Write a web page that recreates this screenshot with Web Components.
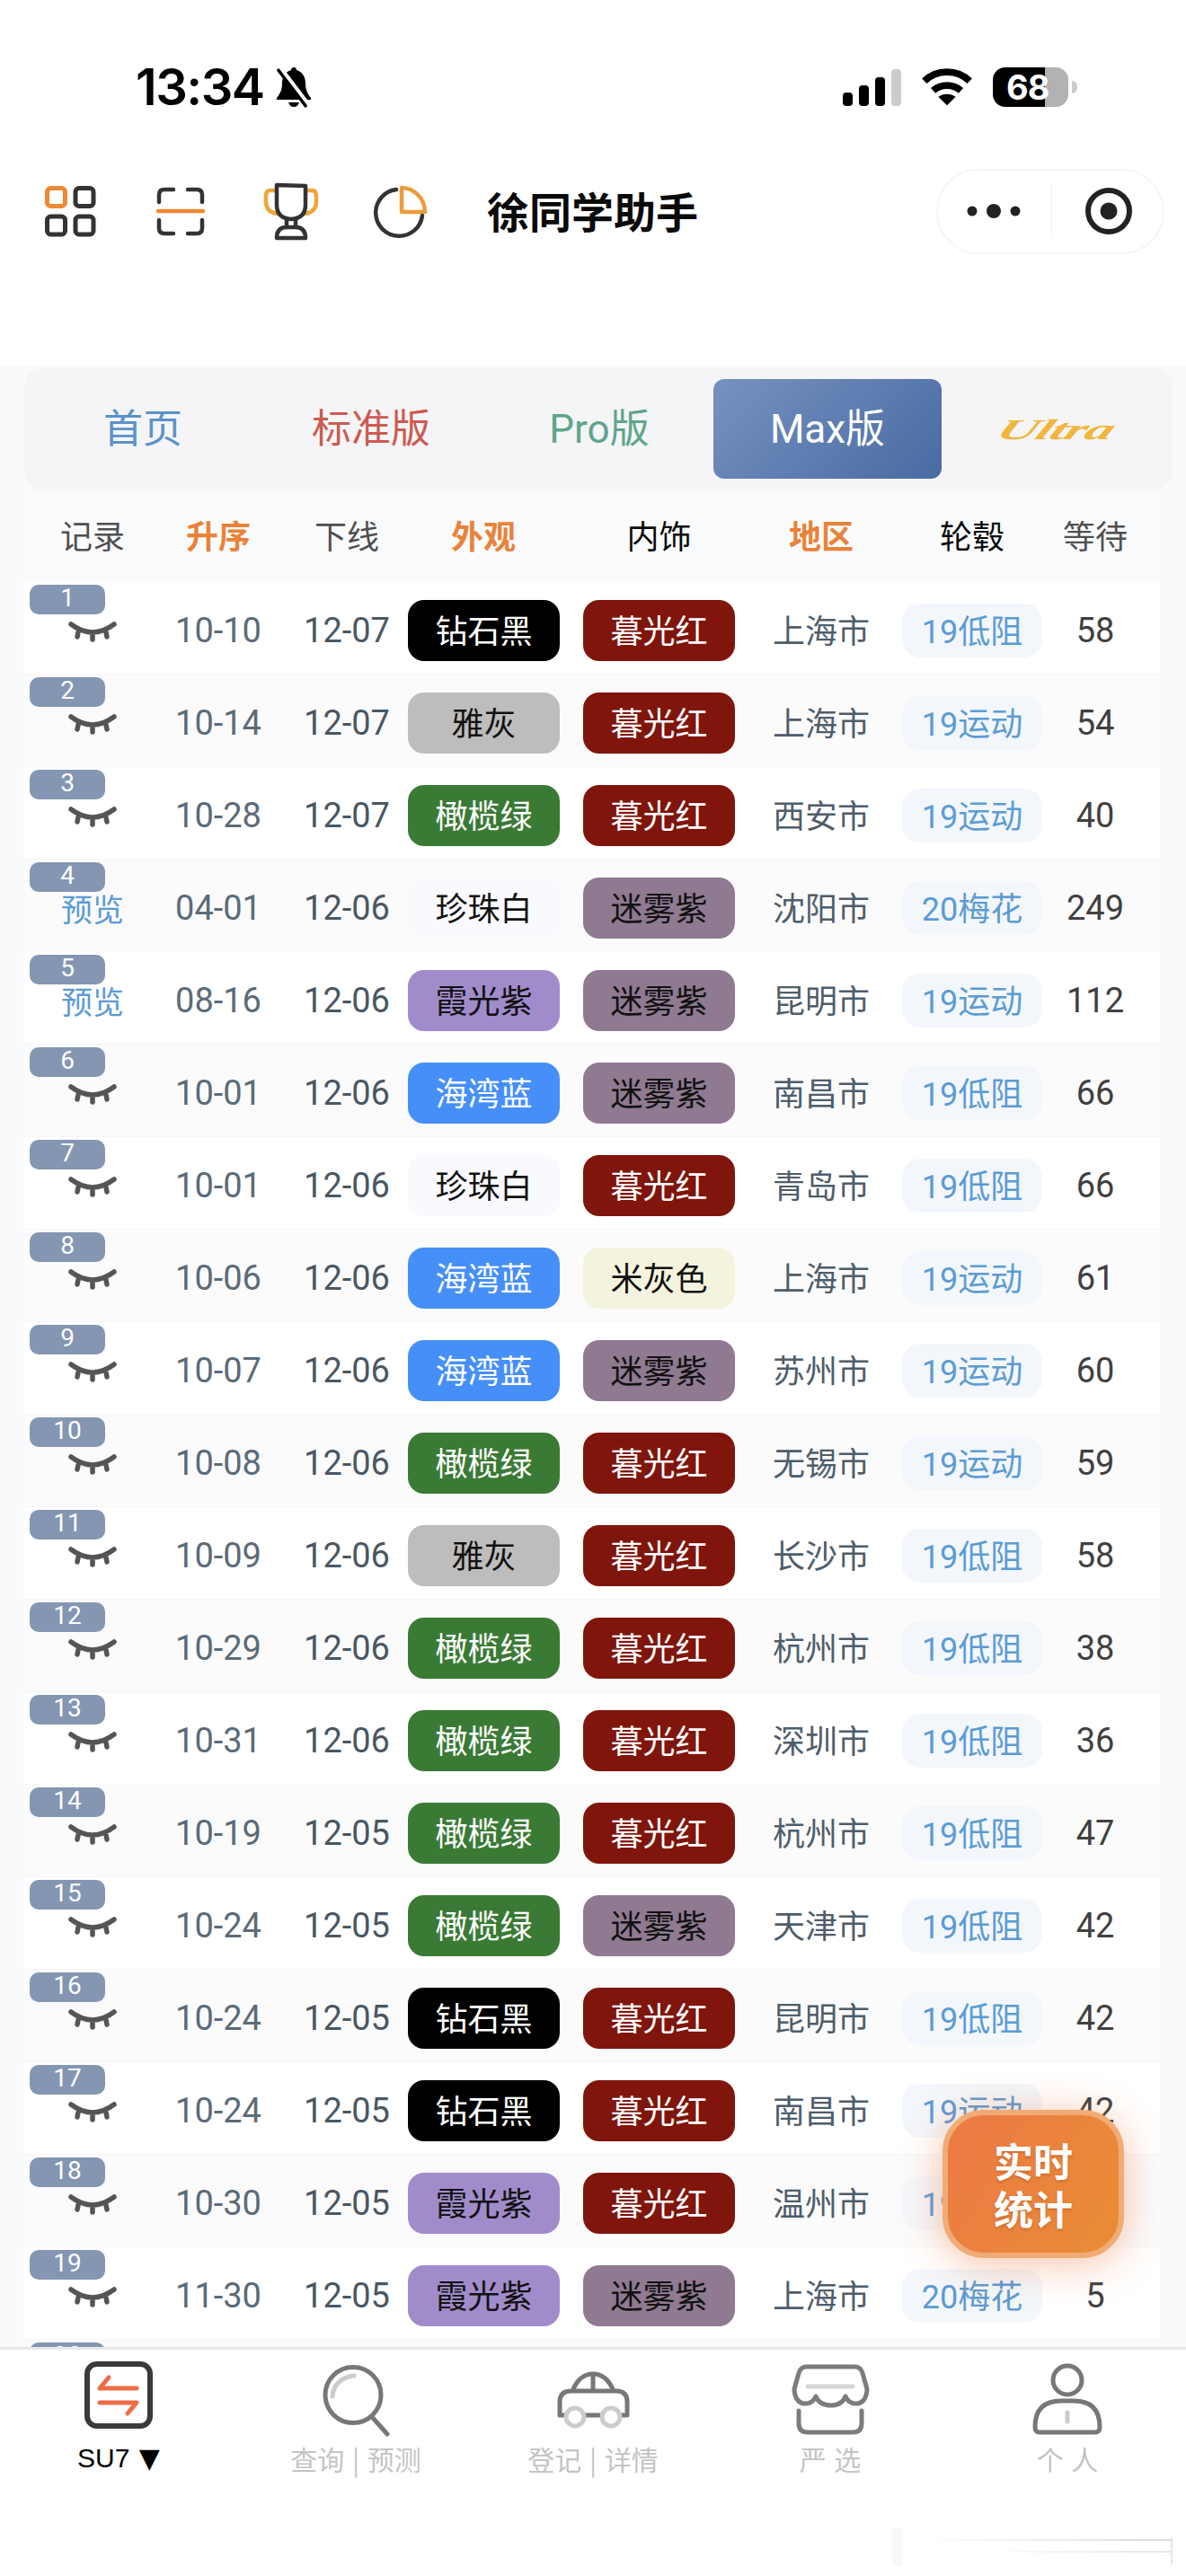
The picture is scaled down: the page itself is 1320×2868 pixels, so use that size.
<!DOCTYPE html>
<html lang="zh">
<head>
<meta charset="utf-8">
<title>徐同学助手</title>
<style>
    html, body {
        margin: 0;
        background: #fff;
    }

    body {
        height: 2868px;
        overflow: hidden;
        position: relative;
        display: flex;
        flex-direction: column;
        font-family: Roboto, "Noto Sans CJK SC", sans-serif;
        --cols: 154px 126px 148px 182px 195px 166px 170px 104px;
        --cjk: "Noto Sans CJK SC", sans-serif;
    }
</style>
</head>
<body>
<status-bar></status-bar>
<app-header></app-header>
<delivery-board>
    <version-tabs></version-tabs>
    <table-head></table-head>
</delivery-board>
<bottom-nav>
    <nav-item label="SU7" kind="su7" active></nav-item>
    <nav-item label="查询 | 预测" kind="search"></nav-item>
    <nav-item label="登记 | 详情" kind="car"></nav-item>
    <nav-item label="严 选" kind="store"></nav-item>
    <nav-item label="个 人" kind="person"></nav-item>
</bottom-nav>
<stat-fab></stat-fab>

<script>
class StatusBar extends HTMLElement {
    constructor() {
        super();
        this.attachShadow({ mode: 'open' }).innerHTML = `
<style>
    :host { display: flex; align-items: center; height: 150px; padding: 44px 0 0 151px; box-sizing: border-box; flex: none; color: #000; }
    .time { font: 600 56px/1 Inter, "Liberation Sans", sans-serif; letter-spacing: -1.5px; width: 154px; }
    .bell { width: 44px; height: 46px; display: block; }
    .right { margin-left: auto; margin-right: 121px; display: flex; align-items: center; }
    .signal { display: flex; align-items: flex-end; gap: 7px; height: 41px; }
    .signal i { width: 11px; background: #000; border-radius: 4px; display: block; }
    .signal i:last-child { background: #ccc; }
    .wifi { width: 58px; height: 44px; margin-left: 22px; display: block; }
    .battery { margin-left: 22px; width: 84px; height: 44px; border-radius: 14px; background: linear-gradient(90deg, #000 0 58px, #b2b2b2 58px); color: #fff; font: 700 38px/44px Inter, sans-serif; text-indent: 15px; letter-spacing: -1px; }
    .nub { width: 6px; height: 14px; background: #ccc; border-radius: 0 6px 6px 0; margin-left: 4px; }
</style>
<span class="time">13:34</span>
<svg class="bell" viewBox="0 0 44 46" fill="#000">
    <path d="M22 1c-2 0-3 1-3 3-7 2-10 8-10 15 0 8-3 12-6 16v2h38v-2c-3-4-6-8-6-16 0-7-3-13-10-15 0-2-1-3-3-3z"/>
    <path d="M16 40c1 3 3 5 6 5s5-2 6-5z"/>
    <path d="M6 2l32 42" stroke="#fff" stroke-width="7"/>
    <path d="M4 3l32 42" stroke="#000" stroke-width="3.5"/>
</svg>
<div class="right">
    <div class="signal"><i style="height:15px"></i><i style="height:23px"></i><i style="height:32px"></i><i style="height:41px"></i></div>
    <svg class="wifi" viewBox="0 0 60 44" fill="none" stroke="#000">
        <path d="M4 15C18 1 42 1 56 15" stroke-width="8"/>
        <path d="M14 26c9-8 23-8 32 0" stroke-width="8"/>
        <path d="M30 43L20 33c6-4 14-4 20 0z" fill="#000" stroke="none"/>
    </svg>
    <div class="battery">68</div>
    <div class="nub"></div>
</div>
`;
    }
}

class AppHeader extends HTMLElement {
    constructor() {
        super();
        this.attachShadow({ mode: 'open' }).innerHTML = `
<style>
    :host { display: flex; align-items: center; flex: none; height: 170px; margin-bottom: 88px; padding: 0 24px 0 16px; box-sizing: border-box; }
    .ico { width: 123px; height: 70px; display: flex; align-items: center; justify-content: center; flex: none; }
    svg { display: block; fill: none; stroke-linecap: round; stroke-linejoin: round; }
    h1 { margin: -4px 0 0 34px; font: 700 47px/1 var(--cjk); color: #0a0a0a; }
    .capsule { margin-left: auto; width: 254px; height: 95px; box-sizing: border-box; border: 2px solid #f5f5f5; border-radius: 48px; display: flex; align-items: center; background: #fff; }
    .capsule svg { flex: none; }
    .capsule .sep { width: 1px; height: 60px; background: #f0f0f0; flex: none; }
</style>
<div class="ico"><svg width="60" height="60" viewBox="0 0 60 60" stroke="#333" stroke-width="5">
    <rect x="4.5" y="4.5" width="20" height="20" rx="4" stroke="#ec8a35"/>
    <rect x="36" y="4.5" width="20" height="20" rx="4"/>
    <rect x="4.5" y="36" width="20" height="20" rx="4"/>
    <rect x="36" y="36" width="20" height="20" rx="4"/>
</svg></div>
<div class="ico"><svg width="60" height="60" viewBox="0 0 60 60" stroke="#333" stroke-width="4.5">
    <path d="M22 6H12Q6 6 6 12V20M38 6H48Q54 6 54 12V20M22 55H12Q6 55 6 49V40M38 55H48Q54 55 54 49V40"/>
    <path d="M5 30H55" stroke="#ec8a35"/>
</svg></div>
<div class="ico"><svg width="64" height="66" viewBox="293 202 64 66" stroke-width="4.5">
    <path d="M308 212H302Q297 212 297 218V224Q297 236 309 238M342 212H348Q353 212 353 218V224Q353 236 341 238" stroke="#eea53a"/>
    <path d="M309 206L341 207V228Q341 243 325 244Q309 243 309 228ZM320 244V253M330 244V253M309 265Q309 253 320 253H330Q341 253 341 265Z" stroke="#333"/>
</svg></div>
<div class="ico"><svg width="62" height="62" viewBox="416 204 62 62" stroke-width="4.5">
    <path d="M447 209A27 27 0 0 1 473 236H447Z" stroke="#eb9c3a"/>
    <path d="M441 211A26 26 0 1 0 470 240" stroke="#333"/>
</svg></div>
<h1>徐同学助手</h1>
<div class="capsule">
    <svg width="126" height="40" viewBox="0 0 126 40" style="fill:#222"><circle cx="38" cy="20" r="5.5"/><circle cx="62" cy="20" r="8"/><circle cx="86" cy="20" r="5.5"/></svg>
    <div class="sep"></div>
    <svg width="126" height="64" viewBox="0 0 126 64"><circle cx="63" cy="32" r="23" stroke="#222" stroke-width="6"/><circle cx="63" cy="32" r="9.5" style="fill:#222"/></svg>
</div>
`;
    }
}

class DeliveryBoard extends HTMLElement {
    constructor() {
        super();
        this.attachShadow({ mode: 'open' }).innerHTML = `
<style>
    :host { display: block; flex: none; height: 2205px; padding-top: 2px; box-sizing: border-box; overflow: hidden; background: #f9fafc; }
</style>
<slot></slot>
`;
    }
}

class VersionTabs extends HTMLElement {
    constructor() {
        super();
        this.attachShadow({ mode: 'open' }).innerHTML = `
<style>
    :host { display: flex; height: 135px; margin: 0 15px 0 27px; padding: 12px 0 12px 5px; box-sizing: border-box; background: #f5f5f8; border-radius: 20px; }
    .tab { width: 254px; flex: none; display: flex; align-items: center; justify-content: center; font-size: 44px; border-radius: 12px; }
    .tab span { margin-top: -8px; }
    .max { color: #fff; background: linear-gradient(135deg, #7592c0, #4a6aa2); }
    .tab .ultra { margin-top: 0; font: italic 700 46px/1 "Liberation Serif", serif; color: #f1b63c; letter-spacing: -1px; transform: scale(1.35, .7) skewX(-14deg); }
</style>
<div class="tab" style="color:#5a92c8"><span>首页</span></div>
<div class="tab" style="color:#cc5a50"><span>标准版</span></div>
<div class="tab" style="color:#5fa58a"><span>Pro版</span></div>
<div class="tab max"><span>Max版</span></div>
<div class="tab"><span class="ultra">Ultra</span></div>
`;
    }
}

class TableHead extends HTMLElement {
    constructor() {
        super();
        this.attachShadow({ mode: 'open' }).innerHTML = `
<style>
    :host { display: grid; grid-template-columns: var(--cols); align-items: center; justify-items: center; height: 98px; padding-bottom: 9px; box-sizing: border-box; margin: 5px 29px 0 26px; background: #fafbfd; font: 36px/1 var(--cjk); color: #4f4f4f; }
    .hot { color: #e8833a; font-weight: 700; }
    .dark { color: #0a0a0a; }
</style>
<span>记录</span>
<span class="hot">升序</span>
<span style="padding-left:12px">下线</span>
<span class="hot" style="padding-right:14px">外观</span>
<span class="dark">内饰</span>
<span class="hot">地区</span>
<span class="dark">轮毂</span>
<span>等待</span>
`;
    }
}

const pillColours = {
    '钻石黑': ['#000', '#fff'],
    '雅灰': ['#bdbdbd', '#111'],
    '橄榄绿': ['#3a7a35', '#fff'],
    '珍珠白': ['#f9f9fe', '#111'],
    '霞光紫': ['#a18ccb', '#111'],
    '海湾蓝': ['#468ff9', '#fff'],
    '暮光红': ['#80150c', '#fff'],
    '迷雾紫': ['#8f7a92', '#111'],
    '米灰色': ['#f4f4de', '#111']
};

const rowTemplate = document.createElement('template');
rowTemplate.innerHTML = `
<style>
    :host { display: grid; grid-template-columns: var(--cols); align-items: center; justify-items: center; height: 103px; width: 1265px; margin-left: 26px; padding-top: 5px; box-sizing: border-box; border-bottom: 1px solid #f6f6f7; background: #fff; font-size: 38px; }
    :host([even]) { background: #fbfbfc; }
    .rec { align-self: start; justify-self: stretch; margin-top: -2px; display: flex; flex-direction: column; align-items: center; }
    .badge { align-self: flex-start; margin-left: 7px; width: 84px; height: 33px; border-radius: 10px; background: #8496b2; color: #fff; font-size: 28px; line-height: 30px; text-align: center; }
    .eye { display: block; margin-top: 7px; }
    .look { font: 35px/34px var(--cjk); color: #5b9bd5; margin-top: 1px; }
    .d1 { color: #5b6b77; }
    .d2 { color: #4a5762; padding-left: 12px; }
    .pill { width: 169px; height: 68px; box-sizing: border-box; padding-bottom: 4px; border-radius: 18px; display: flex; align-items: center; justify-content: center; font: 36px/1 var(--cjk); }
    .c4 { justify-self: start; }
    .city { font: 36px/1 var(--cjk); color: #4e5d6a; padding-bottom: 4px; }
    .chip { height: 60px; box-sizing: border-box; padding: 0 22px 3px; border-radius: 20px; background: #f3f7fb; color: #5b9bd5; display: flex; align-items: center; font-size: 36px; }
    .wait { color: #404040; }
</style>
<div class="rec">
    <div class="badge"></div>
</div>
<span class="d1"></span>
<span class="d2"></span>
<div class="pill c4"></div>
<div class="pill c5"></div>
<span class="city"></span>
<div class="chip"></div>
<span class="wait"></span>
`;

const eyeIcon = `<svg class="eye" width="56" height="24" viewBox="0 0 56 24" fill="none" stroke="#555" stroke-width="5.5" stroke-linecap="round"><path d="M4 4Q28 22 52 4M12 13L11 18M28 15V21M43 13L44 18"/></svg>`;

class DeliveryRow extends HTMLElement {
    constructor() {
        super();
        this.root = this.attachShadow({ mode: 'open' });
        this.root.append(rowTemplate.content.cloneNode(true));
    }

    fill(no, data) {
        const [look, d1, d2, outer, inner, city, wheel, wait] = data;
        const $ = s => this.root.querySelector(s);
        $('.badge').textContent = no;
        $('.rec').insertAdjacentHTML('beforeend', look ? `<span class="look">预览</span>` : eyeIcon);
        $('.d1').textContent = d1;
        $('.d2').textContent = d2;
        for (const [sel, name] of [['.c4', outer], ['.c5', inner]]) {
            const [bg, fg] = pillColours[name] || ['#fff', '#111'];
            $(sel).textContent = name;
            $(sel).style.background = bg;
            $(sel).style.color = fg;
        }
        $('.city').textContent = city;
        $('.chip').textContent = wheel;
        $('.wait').textContent = wait;
    }
}

class BottomNav extends HTMLElement {
    constructor() {
        super();
        this.attachShadow({ mode: 'open' }).innerHTML = `
<style>
    :host { display: flex; flex: none; height: 255px; box-sizing: border-box; border-top: 3px solid #e8e8ea; padding-top: 9px; background: #fff; position: relative; z-index: 1; }
    .smudge { position: absolute; left: 993px; top: 199px; width: 312px; height: 42px; background:
        linear-gradient(90deg, transparent 10%, #dcdcdc 100%) 0 12px / 100% 2px no-repeat,
        linear-gradient(90deg, transparent 30%, #e6e6e6 100%) 0 25px / 100% 2px no-repeat,
        linear-gradient(#e6e6e6, #e6e6e6) 100% 10px / 2px 30px no-repeat,
        linear-gradient(#f9f9f9, #f9f9f9) 0 0 / 12px 42px no-repeat; }
</style>
<slot></slot>
<div class="smudge"></div>
`;
    }
}

const navIcons = {
    su7: `<svg width="100" height="88" viewBox="82 2625 100 88" fill="none" stroke-linecap="round" stroke-linejoin="round"><rect x="97" y="2632" width="70" height="69" rx="11" stroke="#3a3a3c" stroke-width="6"/><path d="M152 2659H111L121 2647M111 2675H152L142 2687" stroke="#f06c45" stroke-width="5"/></svg>`,
    search: `<svg width="100" height="88" viewBox="346 2625 100 88" fill="none" stroke-linecap="round"><circle cx="393" cy="2666.5" r="31" stroke="#777" stroke-width="5"/><path d="M415 2692L431 2710" stroke="#777" stroke-width="5"/><path d="M394 2645Q372 2648 370 2668" stroke="#ccc" stroke-width="5"/></svg>`,
    car: `<svg width="100" height="88" viewBox="610 2625 100 88" fill="none" stroke-linecap="round" stroke-linejoin="round"><path d="M629 2689H623V2674Q623 2662 636 2662H686Q698 2662 698 2674V2689H692M651 2689H669M637 2662Q645 2643 660 2643Q675 2643 683 2662M660 2643V2662" stroke="#777" stroke-width="5"/><circle cx="640" cy="2691" r="10" stroke="#ccc" stroke-width="5"/><circle cx="680" cy="2691" r="10" stroke="#ccc" stroke-width="5"/></svg>`,
    store: `<svg width="100" height="88" viewBox="874 2625 100 88" fill="none" stroke-linecap="round" stroke-linejoin="round"><path d="M898 2635H951Q958 2635 960 2642L965 2660Q964 2677 951 2676Q944 2675 941 2668Q937 2678 925 2678Q912 2678 908 2668Q905 2675 898 2676Q885 2677 884 2660L889 2642Q891 2635 898 2635ZM889 2684V2698Q889 2708 899 2708H949Q959 2708 959 2698V2684" stroke="#7c7c7c" stroke-width="5"/><path d="M899 2657H949" stroke="#d5d5d5" stroke-width="5"/></svg>`,
    person: `<svg width="100" height="88" viewBox="1138 2625 100 88" fill="none" stroke-linecap="round" stroke-linejoin="round"><circle cx="1188" cy="2650" r="16" stroke="#777" stroke-width="5"/><path d="M1157 2708H1219Q1224 2708 1224 2702Q1224 2673 1195 2673H1181Q1152 2673 1152 2702Q1152 2708 1157 2708Z" stroke="#777" stroke-width="5"/><path d="M1188 2686V2696" stroke="#ccc" stroke-width="5"/></svg>`
};

class NavItem extends HTMLElement {
    constructor() {
        super();
        this.attachShadow({ mode: 'open' });
    }

    connectedCallback() {
        const on = this.hasAttribute('active');
        this.shadowRoot.innerHTML = `
<style>
    :host { flex: 1; display: flex; flex-direction: column; align-items: center; }
    svg { display: block; }
    .label { margin-top: 4px; font: 30px/40px var(--cjk); color: #c4c4c4; white-space: pre; word-spacing: 2px; }
    .on { font-family: "Liberation Sans", sans-serif; color: #000; }
    .on b { font: 400 30px/40px "DejaVu Sans", sans-serif; }
</style>
${navIcons[this.getAttribute('kind')]}
<div class="label ${on ? 'on' : ''}">${this.getAttribute('label')}${on ? ' <b>▼</b>' : ''}</div>
`;
    }
}

class StatFab extends HTMLElement {
    constructor() {
        super();
        this.attachShadow({ mode: 'open' }).innerHTML = `
<style>
    :host { position: absolute; left: 1049px; top: 2349px; z-index: 2; width: 202px; height: 165px; box-sizing: border-box; border: 6px solid #f1ab76; border-radius: 46px; background: linear-gradient(120deg, #ec7945, #e98d35); box-shadow: 0 6px 46px rgba(238, 120, 60, .45); display: flex; align-items: center; justify-content: center; text-align: center; color: #fff; font: 700 44px/53px var(--cjk); text-shadow: 0 2px 3px rgba(150, 70, 20, .35); }
</style>
<div>实时<br>统计</div>
`;
    }
}

customElements.define('status-bar', StatusBar);
customElements.define('app-header', AppHeader);
customElements.define('delivery-board', DeliveryBoard);
customElements.define('version-tabs', VersionTabs);
customElements.define('table-head', TableHead);
customElements.define('delivery-row', DeliveryRow);
customElements.define('bottom-nav', BottomNav);
customElements.define('nav-item', NavItem);
customElements.define('stat-fab', StatFab);

const rows = [
    [0, '10-10', '12-07', '钻石黑', '暮光红', '上海市', '19低阻', '58'],
    [0, '10-14', '12-07', '雅灰', '暮光红', '上海市', '19运动', '54'],
    [0, '10-28', '12-07', '橄榄绿', '暮光红', '西安市', '19运动', '40'],
    [1, '04-01', '12-06', '珍珠白', '迷雾紫', '沈阳市', '20梅花', '249'],
    [1, '08-16', '12-06', '霞光紫', '迷雾紫', '昆明市', '19运动', '112'],
    [0, '10-01', '12-06', '海湾蓝', '迷雾紫', '南昌市', '19低阻', '66'],
    [0, '10-01', '12-06', '珍珠白', '暮光红', '青岛市', '19低阻', '66'],
    [0, '10-06', '12-06', '海湾蓝', '米灰色', '上海市', '19运动', '61'],
    [0, '10-07', '12-06', '海湾蓝', '迷雾紫', '苏州市', '19运动', '60'],
    [0, '10-08', '12-06', '橄榄绿', '暮光红', '无锡市', '19运动', '59'],
    [0, '10-09', '12-06', '雅灰', '暮光红', '长沙市', '19低阻', '58'],
    [0, '10-29', '12-06', '橄榄绿', '暮光红', '杭州市', '19低阻', '38'],
    [0, '10-31', '12-06', '橄榄绿', '暮光红', '深圳市', '19低阻', '36'],
    [0, '10-19', '12-05', '橄榄绿', '暮光红', '杭州市', '19低阻', '47'],
    [0, '10-24', '12-05', '橄榄绿', '迷雾紫', '天津市', '19低阻', '42'],
    [0, '10-24', '12-05', '钻石黑', '暮光红', '昆明市', '19低阻', '42'],
    [0, '10-24', '12-05', '钻石黑', '暮光红', '南昌市', '19运动', '42'],
    [0, '10-30', '12-05', '霞光紫', '暮光红', '温州市', '19运动', ''],
    [0, '11-30', '12-05', '霞光紫', '迷雾紫', '上海市', '20梅花', '5'],
    [0, '', '', '', '', '', '', '']
];

const board = document.querySelector('delivery-board');
rows.forEach((data, i) => {
    const row = document.createElement('delivery-row');
    if (i % 2) row.setAttribute('even', '');
    row.fill(i + 1, data);
    board.append(row);
});
</script>
</body>
</html>
